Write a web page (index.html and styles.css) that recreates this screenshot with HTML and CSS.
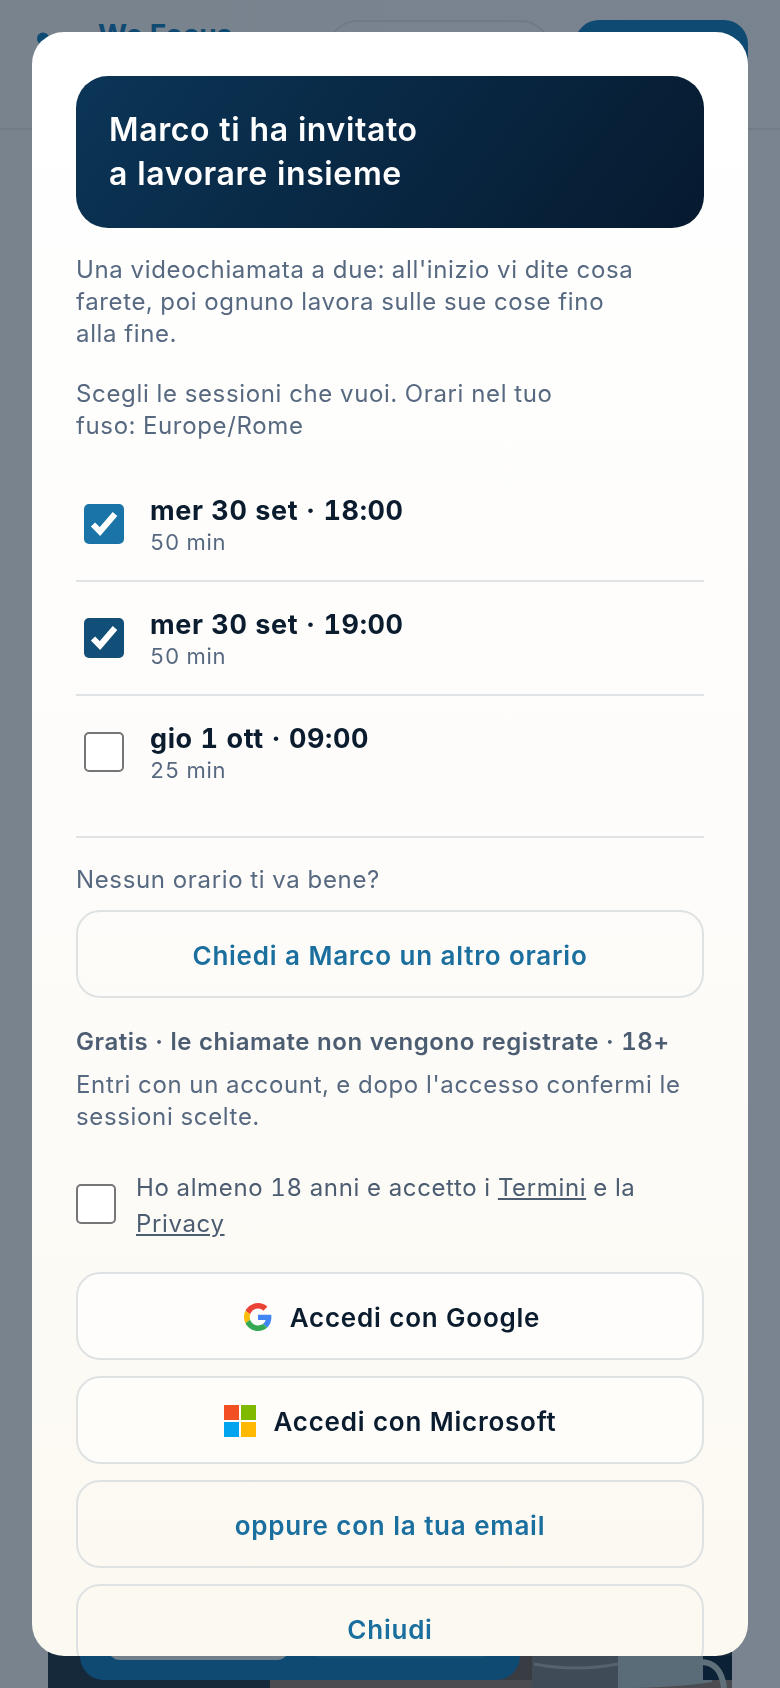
FILE: index.html
```html
<!DOCTYPE html>
<html lang="it">
<head>
<meta charset="utf-8">
<title>We Focus</title>
<link rel="stylesheet" href="styles.css">
</head>
<body>
<div class="page">
  <header class="topbar">
    <div class="brand">
      <svg class="logo" viewBox="0 0 22 44" aria-hidden="true"><circle cx="11" cy="6.500" r="6"/><path d="M0 38c0-14 4-21 11-21s11 7 11 21z"/></svg>
      <span class="brand-name">We Focus</span>
    </div>
    <div class="top-actions">
      <span class="ghost-top"></span>
      <span class="solid-top"></span>
    </div>
  </header>
  <div class="page-fill"></div>
  <section class="hero">
    <svg class="hero-photo" viewBox="0 0 684 58" aria-hidden="true">
      <rect width="684" height="58" fill="#16293a"/>
      <path d="M222 50q200-6 462 0v8H222z" fill="#4b4c52"/>
      <path d="M450 26h34v24h-34z" fill="#3a3c44"/>
      <path d="M484 26h86v32h-86z" fill="#3f4c57"/>
      <path d="M486 34q42 8 84 0" fill="none" stroke="#56636d" stroke-width="3"/>
      <path d="M570 26h94v26q-40 6-94 6z" fill="#5a6c78"/>
      <path d="M655 26h29v24h-29z" fill="#0b2136"/>
      <path d="M652 32c14 0 22 8 24 26" fill="none" stroke="#5f707b" stroke-width="6"/>
    </svg>
    <div class="hero-cta">
      <span class="hero-btn-a"></span>
      <span class="hero-btn-b"></span>
    </div>
  </section>
</div>

<div class="overlay">
  <div class="dialog">
    <div class="banner">
      <h1 class="banner-title">Marco ti ha invitato<br>a lavorare insieme</h1>
    </div>
    <p class="lead lead-first">Una videochiamata a due: all'inizio vi dite cosa<br>farete, poi ognuno lavora sulle sue cose fino<br>alla fine.</p>
    <p class="lead lead-second">Scegli le sessioni che vuoi. Orari nel tuo<br>fuso: Europe/Rome</p>

    <div class="slots">
      <label class="slot">
        <span class="check check-on"><svg viewBox="0 0 40 40" aria-hidden="true"><path d="M9 20.500l7 7L31 10" /></svg></span>
        <span class="slot-text"><span class="slot-title">mer 30 set · 18:00</span><span class="slot-sub">50 min</span></span>
      </label>
      <label class="slot">
        <span class="check check-dark"><svg viewBox="0 0 40 40" aria-hidden="true"><path d="M9 20.500l7 7L31 10" /></svg></span>
        <span class="slot-text"><span class="slot-title">mer 30 set · 19:00</span><span class="slot-sub">50 min</span></span>
      </label>
      <label class="slot slot-last">
        <span class="check"></span>
        <span class="slot-text"><span class="slot-title">gio 1 ott · 09:00</span><span class="slot-sub">25 min</span></span>
      </label>
    </div>

    <p class="lead none-fit">Nessun orario ti va bene?</p>
    <div class="btn btn-link btn-ask">Chiedi a Marco un altro orario</div>

    <p class="free">Gratis · le chiamate non vengono registrate · 18+</p>
    <p class="lead enter">Entri con un account, e dopo l'accesso confermi le<br>sessioni scelte.</p>

    <label class="consent">
      <span class="check"></span>
      <span class="consent-text">Ho almeno 18 anni e accetto i <a class="legal">Termini</a> e la<br><a class="legal">Privacy</a></span>
    </label>

    <div class="stack">
      <div class="btn btn-dark">
        <svg class="g-icon" viewBox="0 0 48 48" aria-hidden="true">
          <path fill="#EA4335" d="M24 9.5c3.54 0 6.71 1.22 9.21 3.6l6.85-6.85C35.9 2.38 30.47 0 24 0 14.62 0 6.51 5.38 2.56 13.22l7.98 6.19C12.43 13.72 17.74 9.5 24 9.5z"/>
          <path fill="#4285F4" d="M46.98 24.55c0-1.57-.15-3.09-.38-4.55H24v9.02h12.94c-.58 2.96-2.26 5.48-4.78 7.18l7.73 6c4.51-4.18 7.09-10.36 7.09-17.65z"/>
          <path fill="#FBBC05" d="M10.53 28.59c-.48-1.45-.76-2.99-.76-4.59s.27-3.14.76-4.59l-7.98-6.19C.92 16.46 0 20.12 0 24c0 3.88.92 7.54 2.56 10.78l7.97-6.19z"/>
          <path fill="#34A853" d="M24 48c6.48 0 11.93-2.13 15.89-5.81l-7.73-6c-2.15 1.45-4.92 2.3-8.16 2.3-6.26 0-11.57-4.22-13.47-9.91l-7.98 6.19C6.51 42.62 14.62 48 24 48z"/>
        </svg>
        <span>Accedi con Google</span>
      </div>
      <div class="btn btn-dark">
        <svg class="ms-icon" viewBox="0 0 32 32" aria-hidden="true">
          <rect width="15" height="15" fill="#F25022"/>
          <rect x="17" width="15" height="15" fill="#7FBA00"/>
          <rect y="17" width="15" height="15" fill="#00A4EF"/>
          <rect x="17" y="17" width="15" height="15" fill="#FFB900"/>
        </svg>
        <span>Accedi con Microsoft</span>
      </div>
      <div class="btn btn-link">oppure con la tua email</div>
      <div class="btn btn-link">Chiudi</div>
    </div>
  </div>
</div>
</body>
</html>
```
FILE: styles.css
```css
* { box-sizing: border-box; }

html, body {
  margin: 0;
  height: 100%;
}

body {
  font-family: Inter, "Noto Sans", sans-serif;
  font-variant-numeric: tabular-nums;
  background: #7a8490;
  overflow: hidden;
}

.page {
  height: 1688px;
  display: flex;
  flex-direction: column;
  background: linear-gradient(90deg, #78838e, #7a8490);
}

.topbar {
  height: 130px;
  flex: none;
  display: flex;
  justify-content: space-between;
  padding: 20px 32px 0 32px;
  border-bottom: 2px solid #717c88;
}

.brand {
  display: flex;
  align-items: flex-start;
  gap: 44px;
}

.logo {
  width: 22px;
  height: 44px;
  margin-top: 12px;
  fill: #0f4a72;
}

.brand-name {
  margin-top: -3px;
  font-size: 28px;
  font-weight: 700;
  color: #0f4a72;
  line-height: 36px;
}

.top-actions {
  display: flex;
  gap: 23px;
}

.ghost-top {
  width: 226px;
  height: 88px;
  border: 2px solid #707b87;
  border-radius: 32px;
}

.solid-top {
  width: 173px;
  height: 88px;
  background: #0f4a72;
  border-radius: 24px;
}

.page-fill {
  flex: 1;
}

.hero {
  flex: none;
  height: 58px;
  margin: 0 48px;
  position: relative;
  overflow: hidden;
}

.hero-photo {
  display: block;
  width: 100%;
  height: 100%;
}

.hero-cta {
  position: absolute;
  left: 32px;
  top: -60px;
  width: 440px;
  height: 110px;
  background: #0f4a72;
  border-radius: 24px;
  display: flex;
  gap: 22px;
  padding: 0 28px;
}

.hero-btn-a {
  width: 182px;
  height: 90px;
  border-radius: 12px;
  background: #73808c;
}

.hero-btn-b {
  width: 183px;
  height: 88px;
  border-radius: 12px;
  background: #185378;
}

.overlay {
  position: fixed;
  inset: 0;
  padding: 32px;
  display: flex;
}

.dialog {
  width: 716px;
  height: 1624px;
  overflow: hidden;
  padding: 44px 44px 0;
  border-radius: 32px;
  background: linear-gradient(180deg, #ffffff 0%, #fdfcfa 50%, #fcf9f1 100%);
}

.banner {
  height: 152px;
  padding: 32px 33px;
  border-radius: 32px;
  background: linear-gradient(128deg, #0b3557 0%, #061a2f 100%);
}

.banner-title {
  margin: 0;
  font-size: 32px;
  font-weight: 600;
  letter-spacing: 0.62px;
  line-height: 44px;
  color: #fff;
}

.lead {
  margin: 0;
  font-size: 24px;
  letter-spacing: 0.65px;
  line-height: 32px;
  color: #576980;
}

.lead-first {
  margin-top: 26px;
}

.lead-second {
  margin-top: 28px;
}

.slots {
  margin-top: 26px;
}

.slot {
  display: flex;
  align-items: center;
  gap: 26px;
  height: 114px;
  padding: 0 8px;
  border-bottom: 2px solid #dfe3e6;
}

.slot-last {
  height: 142px;
  padding-bottom: 28px;
}

.check {
  flex: none;
  width: 40px;
  height: 40px;
  border: 2px solid #767676;
  border-radius: 5px;
  background: #fff;
}

.check svg {
  display: block;
  width: 100%;
  height: 100%;
  fill: none;
  stroke: #fff;
  stroke-width: 6;
}

.check-on {
  border: 0;
  background: #1a74a8;
}

.check-dark {
  border: 0;
  background: #124f78;
}

.slot-text {
  display: flex;
  flex-direction: column;
  padding-top: 2px;
}

.slot-title {
  font-size: 27px;
  font-weight: 700;
  letter-spacing: 0.6px;
  line-height: 34px;
  color: #0a1c2e;
}

.slot-sub {
  font-size: 22px;
  letter-spacing: 0.7px;
  line-height: 28px;
  color: #576980;
}

.none-fit {
  margin-top: 26px;
}

.btn {
  height: 88px;
  flex: none;
  display: flex;
  align-items: center;
  justify-content: center;
  padding-top: 2px;
  border: 2px solid #dfe2e3;
  border-radius: 24px;
  font-size: 26px;
  font-weight: 600;
  letter-spacing: 0.75px;
}

.btn-link {
  color: #1a6f9f;
}

.btn-ask {
  margin-top: 14px;
}

.btn-dark {
  color: #0a1c2e;
  gap: 18px;
  background: rgba(255, 255, 255, 0.55);
}

.free {
  margin: 28px 0 0;
  font-size: 24px;
  font-weight: 600;
  letter-spacing: 0.55px;
  line-height: 32px;
  color: #4c5d72;
}

.enter {
  margin-top: 11px;
}

.consent {
  display: flex;
  align-items: center;
  gap: 20px;
  margin-top: 35px;
}

.consent-text {
  padding-top: 2px;
  margin-bottom: -2px;
  font-size: 24px;
  letter-spacing: 0.63px;
  line-height: 36px;
  color: #4c5d72;
}

.legal {
  text-decoration: underline;
}

.stack {
  display: flex;
  flex-direction: column;
  gap: 16px;
  margin-top: 32px;
}

.g-icon {
  width: 28px;
  height: 28px;
  margin-left: 4px;
}

.ms-icon {
  width: 32px;
  height: 32px;
}
```
